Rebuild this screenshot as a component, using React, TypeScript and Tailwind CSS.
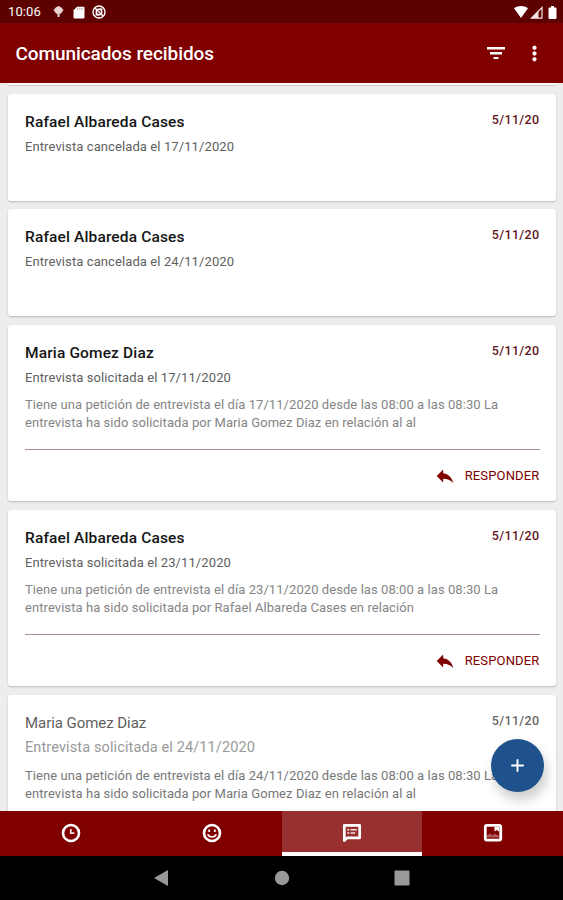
import { Plus } from "lucide-react";
import { MdMoreVert, MdReply } from "react-icons/md";
import clsx from "clsx";

type Message = {
  sender: string;
  subject: string;
  date: string;
  body?: string[];
  read?: boolean;
};

const messages: Message[] = [
  {
    sender: "Rafael Albareda Cases",
    subject: "Entrevista cancelada el 17/11/2020",
    date: "5/11/20",
  },
  {
    sender: "Rafael Albareda Cases",
    subject: "Entrevista cancelada el 24/11/2020",
    date: "5/11/20",
  },
  {
    sender: "Maria Gomez Diaz",
    subject: "Entrevista solicitada el 17/11/2020",
    date: "5/11/20",
    body: [
      "Tiene una petición de entrevista el día 17/11/2020 desde las 08:00 a las 08:30 La",
      "entrevista ha sido solicitada por Maria Gomez Diaz en relación al al",
    ],
  },
  {
    sender: "Rafael Albareda Cases",
    subject: "Entrevista solicitada el 23/11/2020",
    date: "5/11/20",
    body: [
      "Tiene una petición de entrevista el día 23/11/2020 desde las 08:00 a las 08:30 La",
      "entrevista ha sido solicitada por Rafael Albareda Cases en relación",
    ],
  },
  {
    sender: "Maria Gomez Diaz",
    subject: "Entrevista solicitada el 24/11/2020",
    date: "5/11/20",
    body: [
      "Tiene una petición de entrevista el día 24/11/2020 desde las 08:00 a las 08:30 La",
      "entrevista ha sido solicitada por Maria Gomez Diaz en relación al al",
    ],
    read: true,
  },
];

function StatusBar() {
  return (
    <div className="flex h-[23px] shrink-0 items-center bg-[#5c0000] px-2 pt-px text-white">
      <span className="w-[45px] text-[13px] tracking-[0.1px]">10:06</span>
      <svg width="11" height="12" viewBox="0 0 11 12" fill="#e9d4d4">
        <path d="M5.5 0 8 1.3 10.5 4 8 7.5 6.5 8v3h-2V8L3 7.5.5 4 3 1.3Z" />
      </svg>
      <svg className="ml-[9px]" width="12" height="13" viewBox="0 0 12 13" fill="#fff">
        <path d="M4 .8h6.5q1 0 1 1v9.6q0 1-1 1h-9q-1 0-1-1V4.3Z" />
        <path d="M4.6 2v2M6.8 2v2M9 2v2" stroke="#b98a8a" strokeWidth=".8" />
      </svg>
      <svg className="ml-[7px]" width="14" height="14" viewBox="0 0 14 14" fill="none" stroke="#fff" strokeWidth="1.4">
        <circle cx="7" cy="7" r="6" />
        <circle cx="7" cy="7" r="2.8" />
        <path d="m3.2 3.2 7.6 7.6M7 4.2h3.5M3.5 9.8H7" />
      </svg>
      <svg className="ml-auto" width="14" height="12" viewBox="0 0 14 12" fill="#fff">
        <path d="M0 2.3C4-.7 10-.7 14 2.3L7 12Z" />
      </svg>
      <svg className="ml-[2px]" width="13" height="13" viewBox="0 0 13 13">
        <path d="M12 1.5v10.7H1.3Z" fill="none" stroke="#f3e3e3" strokeWidth="1.2" />
        <path d="M8.5 5v7.2H1.3Z" fill="#f3e3e3" />
      </svg>
      <svg className="-mr-[2px] ml-[5px]" width="9" height="13" viewBox="0 0 9 13" fill="#fff">
        <path d="M3 0h3v1.4h1.5q1 0 1 1V12q0 1-1 1h-6q-1 0-1-1V2.4q0-1 1-1H3Z" />
      </svg>
    </div>
  );
}

function Header() {
  return (
    <header className="flex h-[60px] shrink-0 items-center bg-[#800000] pr-[17px] pl-[15.5px] text-white">
      <h1 className="flex-1 pt-[3px] text-[19px] font-medium tracking-[-0.08px]">
        Comunicados recibidos
      </h1>
      <svg width="18" height="12" viewBox="0 0 18 12" fill="#fff">
        <path d="M0 0h18v2.4H0ZM3 5h12v2.4H3ZM6.5 10h5v2.2h-5Z" />
      </svg>
      <MdMoreVert className="ml-[18px] h-[23px] w-[23px] stroke-white stroke-[0.4] [&>path:first-child]:stroke-none" />
    </header>
  );
}

function MessageCard({ message }: { message: Message }) {
  const { sender, subject, date, body, read } = message;

  return (
    <article
      className={clsx(
        "shrink-0 rounded-[3px] bg-white px-[17px] pt-[18px] shadow-[0_1px_2px_rgba(0,0,0,0.22)]",
        body ? "h-[176.5px]" : "h-[107px]"
      )}
    >
      <div className="flex justify-between">
        <h2
          className={clsx(
            "leading-[20px]",
            read
              ? "text-[15px] tracking-[-0.05px] text-[#606060]"
              : "text-[15.5px] font-medium tracking-[0.14px] text-[#151515]"
          )}
        >
          {sender}
        </h2>
        <span
          className={clsx(
            "-mr-px text-[12.5px] leading-[16px] font-medium tracking-[0.35px]",
            read ? "text-[#666]" : "text-[#5f1520]"
          )}
        >
          {date}
        </span>
      </div>

      <p
        className={clsx(
          "mt-[5px] leading-[19px]",
          read
            ? "text-[14.5px] tracking-[0.12px] text-[#999]"
            : "text-[13px] tracking-[0.1px] text-[#606060]"
        )}
      >
        {subject}
      </p>

      {body && (
        <div
          className={clsx(
            "text-[13px] leading-[18px] tracking-[0.07px] whitespace-nowrap",
            read ? "mt-[10px] text-[#777]" : "mt-[9px] text-[#858585]"
          )}
        >
          {body.map((line) => (
            <p key={line}>{line}</p>
          ))}
        </div>
      )}

      {body && !read && (
        <>
          <hr className="mt-[17px] -mr-px border-[#aa9090]" />
          <button
            type="button"
            className="mt-[16px] -mr-px ml-auto flex h-5 items-center text-[13px] tracking-[0.15px] text-[#800000]"
          >
            <MdReply className="mr-[9px] h-[22px] w-[22px]" />
            RESPONDER
          </button>
        </>
      )}
    </article>
  );
}

function ClockIcon() {
  return (
    <svg width="20" height="20" viewBox="0 0 20 20" fill="none" stroke="#fff">
      <circle cx="10" cy="10" r="8" strokeWidth="2.6" />
      <path d="M9.8 6v4.2h3.6" strokeWidth="1.8" opacity=".85" />
    </svg>
  );
}

function SmileIcon() {
  return (
    <svg width="20" height="20" viewBox="0 0 20 20" fill="none" stroke="#fff">
      <circle cx="10" cy="10" r="8" strokeWidth="2.6" />
      <path d="M5.8 11.3c1.2 3.6 7.2 3.6 8.4 0" strokeWidth="1.6" />
      <path d="M7.2 6.5v2.6M12.8 6.5v2.6" strokeWidth="1.8" />
    </svg>
  );
}

function CommentIcon() {
  return (
    <svg width="20" height="20" viewBox="0 0 20 20" fill="none" stroke="#fff">
      <path d="M2.3 17.6V2.3h15.4v12.5H5.3Z" strokeWidth="2.7" strokeLinejoin="round" />
      <path d="M5.2 6.8h2.2M8.6 6.8h6.2M5.2 10h2.2M8.6 10h4.6" strokeWidth="1.5" opacity=".85" />
    </svg>
  );
}

function NewsIcon() {
  return (
    <svg width="20" height="20" viewBox="0 0 20 20" fill="none" stroke="#fff">
      <rect x="2.3" y="2.3" width="15.4" height="14.8" rx="1.5" strokeWidth="2.8" />
      <path d="M11.5 4H16v4.5l-2.2-1.4-2.3 1.4Z" fill="#fff" stroke="none" />
      <path d="M4 14.5v-2l3-2 2.5 2 2.5-2 4 2.5v1.5Z" fill="#fff" stroke="none" opacity=".35" />
    </svg>
  );
}

const tabs = [
  { id: "agenda", icon: <ClockIcon /> },
  { id: "students", icon: <SmileIcon /> },
  { id: "messages", icon: <CommentIcon /> },
  { id: "news", icon: <NewsIcon /> },
];

export default function App() {
  return (
    <div className="flex h-[900px] w-[563px] flex-col overflow-hidden bg-[#ededed] font-[Roboto,sans-serif]">
      <StatusBar />
      <Header />

      <main className="relative min-h-0 flex-1 overflow-hidden">
        <div className="mr-[7.5px] ml-[8px] flex flex-col gap-[8.5px]">
          <div className="h-[2px] shrink-0 rounded-b-[3px] bg-white shadow-[0_1px_1px_rgba(0,0,0,0.15)]" />
          {messages.map((message, idx) => (
            <MessageCard key={idx} message={message} />
          ))}
        </div>

        <button
          type="button"
          className="absolute right-[19px] bottom-[19px] flex h-[53px] w-[53px] items-center justify-center rounded-full bg-[#1f528d] text-white shadow-[3px_8px_12px_rgba(0,0,0,0.2)]"
        >
          <Plus className="h-[19px] w-[19px]" strokeWidth={2.4} />
        </button>
      </main>

      <nav className="grid h-[45px] shrink-0 grid-cols-4 bg-[#800000] text-white">
        {tabs.map(({ id, icon }) => (
          <button
            key={id}
            type="button"
            className={clsx(
              "flex items-center justify-center border-b-4 pt-[2px] pl-px",
              id === "messages" ? "border-white bg-[#993030]" : "border-transparent"
            )}
          >
            {icon}
          </button>
        ))}
      </nav>

      {/* System navigation */}
      <div className="flex h-[44px] shrink-0 items-center justify-center bg-black">
        <svg width="256" height="16" viewBox="0 0 256 16" fill="#999">
          <path d="M0 8 14 0v16Z" />
          <circle cx="128" cy="8" r="7.2" />
          <rect x="240.5" y=".5" width="15" height="15" rx="1" />
        </svg>
      </div>
    </div>
  );
}
